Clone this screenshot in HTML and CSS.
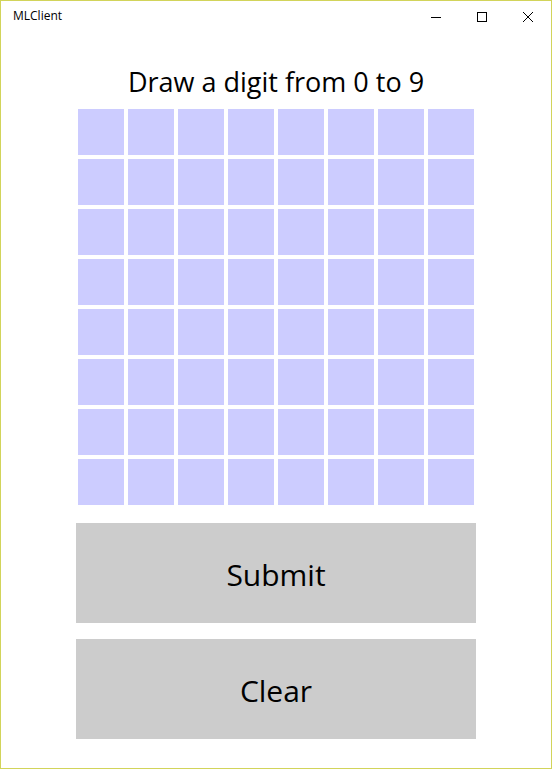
FILE: index.html
```html
<!DOCTYPE html>
<html>
<head>
<meta charset="utf-8">
<title>MLClient</title>
<link rel="stylesheet" href="styles.css">
</head>
<body>
<div class="window">
  <div class="titlebar">
    <div class="app-title">MLClient</div>
    <div class="controls">
      <div class="ctl"><svg width="10" height="10" viewBox="0 0 10 10"><line x1="0" y1="5.5" x2="10" y2="5.5" stroke="#000" stroke-width="1"/></svg></div>
      <div class="ctl"><svg width="10" height="10" viewBox="0 0 10 10"><rect x="0.5" y="0.5" width="9" height="9" fill="none" stroke="#000" stroke-width="1"/></svg></div>
      <div class="ctl"><svg width="10" height="10" viewBox="0 0 10 10"><path d="M0 0L10 10M10 0L0 10" stroke="#000" stroke-width="1"/></svg></div>
    </div>
  </div>
  <div class="content">
    <h1 class="heading">Draw a digit from 0 to 9</h1>
    <div class="grid">
      <div class="cell"></div><div class="cell"></div><div class="cell"></div><div class="cell"></div><div class="cell"></div><div class="cell"></div><div class="cell"></div><div class="cell"></div>
      <div class="cell"></div><div class="cell"></div><div class="cell"></div><div class="cell"></div><div class="cell"></div><div class="cell"></div><div class="cell"></div><div class="cell"></div>
      <div class="cell"></div><div class="cell"></div><div class="cell"></div><div class="cell"></div><div class="cell"></div><div class="cell"></div><div class="cell"></div><div class="cell"></div>
      <div class="cell"></div><div class="cell"></div><div class="cell"></div><div class="cell"></div><div class="cell"></div><div class="cell"></div><div class="cell"></div><div class="cell"></div>
      <div class="cell"></div><div class="cell"></div><div class="cell"></div><div class="cell"></div><div class="cell"></div><div class="cell"></div><div class="cell"></div><div class="cell"></div>
      <div class="cell"></div><div class="cell"></div><div class="cell"></div><div class="cell"></div><div class="cell"></div><div class="cell"></div><div class="cell"></div><div class="cell"></div>
      <div class="cell"></div><div class="cell"></div><div class="cell"></div><div class="cell"></div><div class="cell"></div><div class="cell"></div><div class="cell"></div><div class="cell"></div>
      <div class="cell"></div><div class="cell"></div><div class="cell"></div><div class="cell"></div><div class="cell"></div><div class="cell"></div><div class="cell"></div><div class="cell"></div>
    </div>
    <button class="btn btn-submit">Submit</button>
    <button class="btn btn-clear">Clear</button>
  </div>
</div>
</body>
</html>
```
FILE: styles.css
```css
html, body {
  margin: 0;
  padding: 0;
  background: #ffffff;
}
.window {
  box-sizing: border-box;
  width: 552px;
  height: 769px;
  border: 1px solid #d2d45a;
  background: #ffffff;
  display: flex;
  flex-direction: column;
  font-family: "Open Sans", "Noto Sans", sans-serif;
  color: #000;
}
.titlebar {
  height: 31px;
  display: flex;
  align-items: stretch;
  justify-content: space-between;
}
.app-title {
  font-size: 12px;
  line-height: 30px;
  padding-left: 12px;
}
.controls {
  display: flex;
}
.ctl {
  width: 46px;
  display: flex;
  align-items: center;
  justify-content: center;
}
.ctl svg {
  display: block;
  margin-top: 1px;
}
.content {
  display: flex;
  flex-direction: column;
  align-items: center;
}
.heading {
  margin: 28px 0 0 0;
  font-size: 27px;
  font-weight: 400;
  line-height: 43px;
  height: 43px;
}
.grid {
  margin-top: 4px;
  width: 400px;
  box-sizing: border-box;
  padding: 2px;
  display: grid;
  grid-template-columns: repeat(8, 46px);
  grid-auto-rows: 46px;
  gap: 4px;
}
.cell {
  background: #ccccff;
}
.btn {
  width: 400px;
  height: 100px;
  margin-top: 16px;
  border: none;
  padding: 3px 0 0 0;
  background: #cccccc;
  font-family: "Open Sans", "Noto Sans", sans-serif;
  font-size: 30px;
  color: #000;
}
```
